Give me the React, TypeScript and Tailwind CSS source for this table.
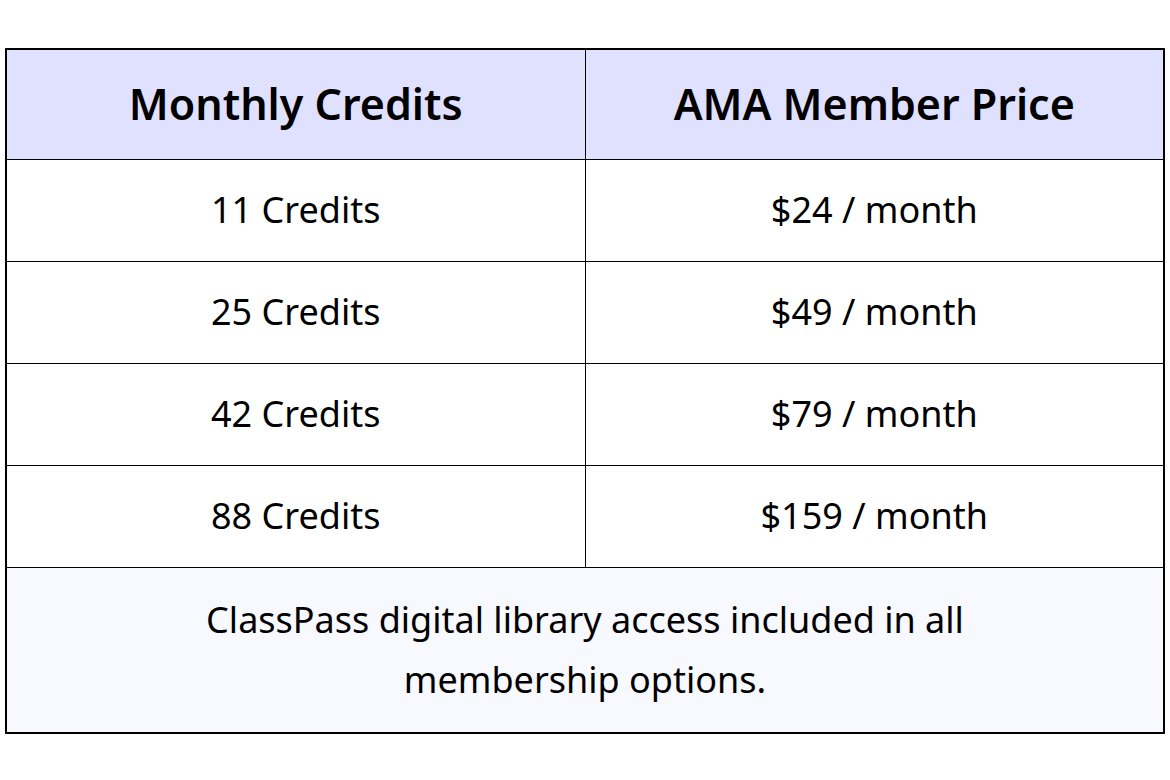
import React from 'react';

const rows = [
  { credits: '11 Credits', price: '$24 / month' },
  { credits: '25 Credits', price: '$49 / month' },
  { credits: '42 Credits', price: '$79 / month' },
  { credits: '88 Credits', price: '$159 / month' },
];

const App: React.FC = () => {
  return (
    <div className="w-[1170px] h-[780px] bg-white pt-[48px] px-[5px] font-['Noto_Sans',sans-serif] text-black">
      <table className="w-[1160px] border-collapse border-2 border-black">
        <thead>
          <tr className="h-[110px] bg-[#e0e0ff]">
            <th className="w-[579px] border border-black text-[43px] font-semibold">Monthly Credits</th>
            <th className="border border-black text-[43px] font-semibold">AMA Member Price</th>
          </tr>
        </thead>
        <tbody>
          {rows.map((r) => (
            <tr key={r.credits} className="h-[102px]">
              <td className="border border-black text-center text-[36px]">{r.credits}</td>
              <td className="border border-black text-center text-[36px]">{r.price}</td>
            </tr>
          ))}
          <tr className="h-[166px] bg-[#f8f8ff]">
            <td colSpan={2} className="border border-black text-center text-[36px] leading-[60px]">
              ClassPass digital library access included in all
              <br />
              membership options.
            </td>
          </tr>
        </tbody>
      </table>
    </div>
  );
};

export default App;
